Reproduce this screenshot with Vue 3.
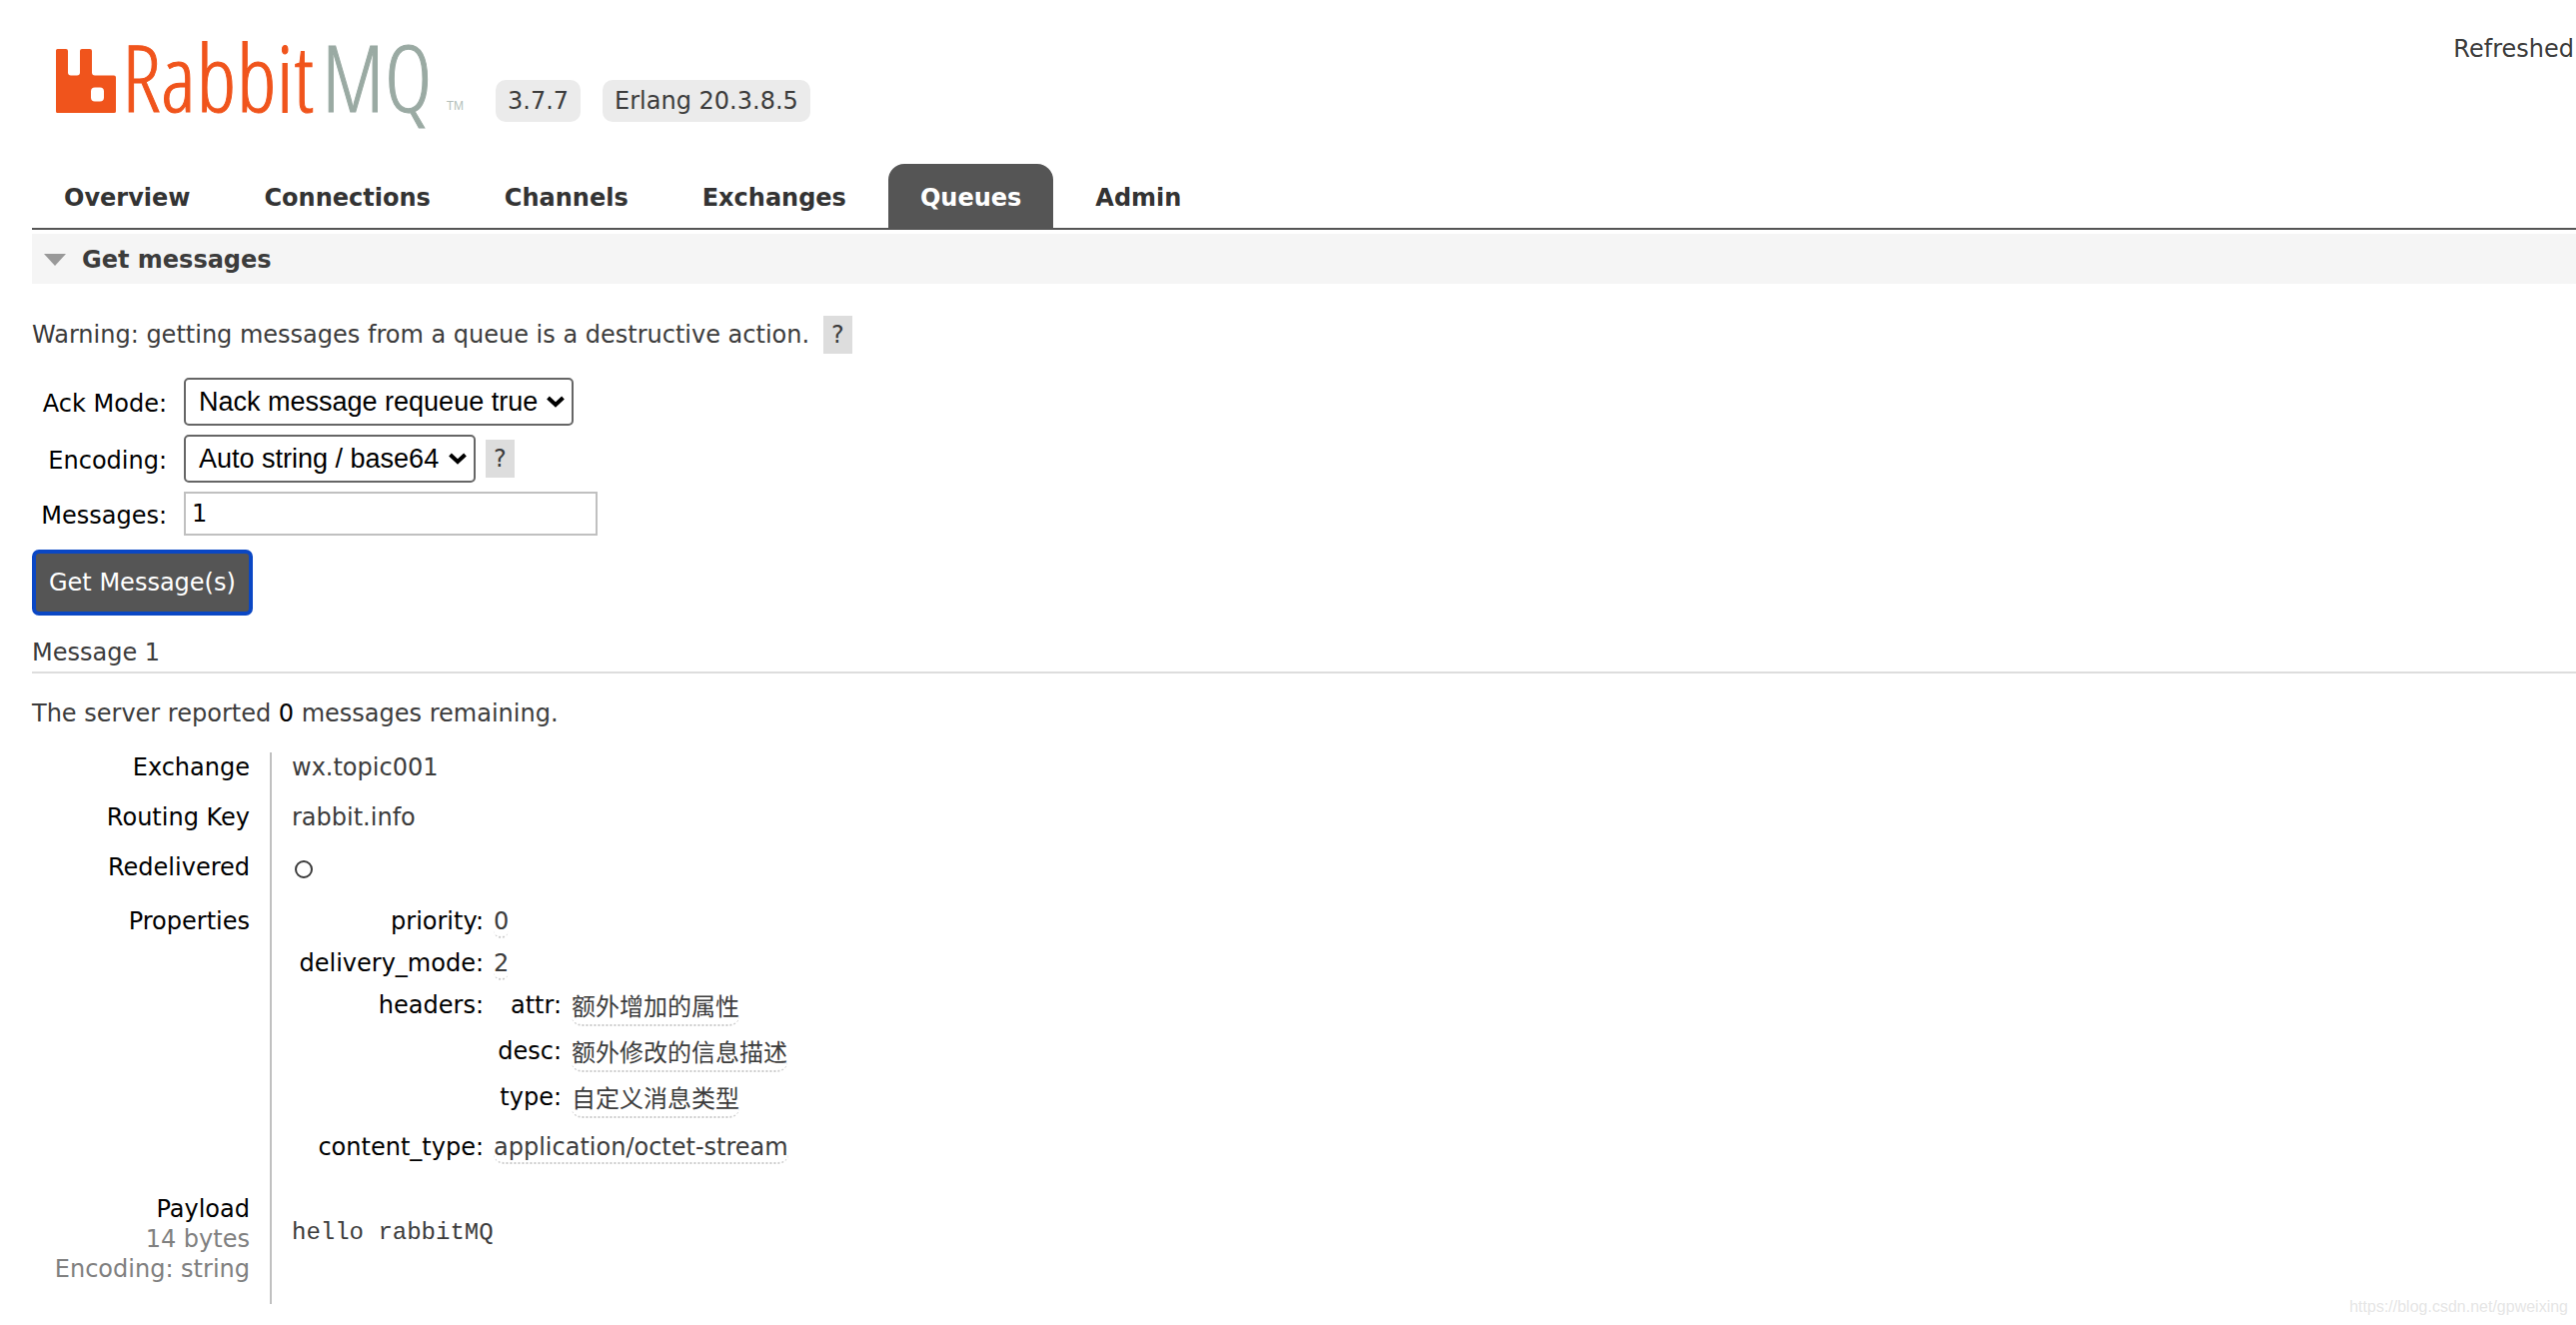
<script setup>
import { ref } from 'vue'

const tabs = ['Overview', 'Connections', 'Channels', 'Exchanges', 'Queues', 'Admin']
const activeTab = ref('Queues')
const ackMode = ref('Nack message requeue true')
const encoding = ref('Auto string / base64')
const count = ref('1')

const headers = [
  { key: 'attr', value: '额外增加的属性' },
  { key: 'desc', value: '额外修改的信息描述' },
  { key: 'type', value: '自定义消息类型' },
]
</script>

<template>
  <div class="page">
    <header class="top">
      <a class="logo" href="#" aria-label="RabbitMQ">
        <svg class="mark" viewBox="0 0 60 64" aria-hidden="true">
          <path
            fill="#f0541c"
            fill-rule="evenodd"
            d="M0 1.500Q0 0 1.500 0H10Q12 0 12 2V23.500Q12 26.500 15 26.500H21Q24 26.500 24 23.500V2Q24 0 26 0H34Q36 0 36 2V23.500Q36 26.500 39 26.500H58Q60 26.500 60 28.500V62.500Q60 64 58 64H1.500Q0 64 0 62.500ZM39 38.500Q35 38.500 35 42.500V48.500Q35 52.500 39 52.500H44Q48 52.500 48 48.500V42.500Q48 38.500 44 38.500Z"
          />
        </svg>
        <span class="word"><span>Rabbit</span><span class="mq">MQ</span></span>
        <span class="tm">TM</span>
      </a>
      <span class="badge">3.7.7</span>
      <span class="badge">Erlang 20.3.8.5</span>
      <span class="refreshed">Refreshed</span>
    </header>

    <nav class="tabs">
      <a
        v-for="tab in tabs"
        :key="tab"
        href="#"
        :class="['tab', { active: tab === activeTab }]"
        @click.prevent="activeTab = tab"
        >{{ tab }}</a
      >
    </nav>

    <main>
      <h2 class="section">
        <svg class="tri" viewBox="0 0 22 12" aria-hidden="true"><path fill="#999" d="M0 0H22L11 12Z" /></svg>
        Get messages
      </h2>

      <p class="warning">
        Warning: getting messages from a queue is a destructive action.
        <button type="button" class="help">?</button>
      </p>

      <form @submit.prevent>
        <div class="fields">
          <label for="ack">Ack Mode:</label>
          <div class="control">
            <span class="drop ack">
              <select id="ack" v-model="ackMode">
                <option>Nack message requeue true</option>
              </select>
              <svg viewBox="0 0 20 14" aria-hidden="true"><path d="M2.500 3L10 10L17.500 3" /></svg>
            </span>
          </div>

          <label for="enc">Encoding:</label>
          <div class="control">
            <span class="drop enc">
              <select id="enc" v-model="encoding">
                <option>Auto string / base64</option>
              </select>
              <svg viewBox="0 0 20 14" aria-hidden="true"><path d="M2.500 3L10 10L17.500 3" /></svg>
            </span>
            <button type="button" class="help">?</button>
          </div>

          <label for="count">Messages:</label>
          <div class="control">
            <input id="count" v-model="count" type="text" />
          </div>
        </div>
        <button type="submit" class="get">Get Message(s)</button>
      </form>

      <h3 class="message">Message 1</h3>
      <p class="remaining">The server reported <b>0</b> messages remaining.</p>

      <table class="facts">
        <tbody>
          <tr>
            <th>Exchange</th>
            <td>wx.topic001</td>
          </tr>
          <tr>
            <th>Routing Key</th>
            <td>rabbit.info</td>
          </tr>
          <tr class="redelivered">
            <th>Redelivered</th>
            <td>
              <svg class="ring" viewBox="0 0 20 20" role="img" aria-label="No">
                <circle cx="10" cy="10" r="8" />
              </svg>
            </td>
          </tr>
          <tr>
            <th>Properties</th>
            <td>
              <table class="props">
                <tbody>
                  <tr>
                    <th>priority:</th>
                    <td><abbr>0</abbr></td>
                  </tr>
                  <tr>
                    <th>delivery_mode:</th>
                    <td><abbr>2</abbr></td>
                  </tr>
                  <tr class="nest">
                    <th>headers:</th>
                    <td>
                      <table class="headers">
                        <tbody>
                          <tr v-for="h in headers" :key="h.key">
                            <th>{{ h.key }}:</th>
                            <td><abbr>{{ h.value }}</abbr></td>
                          </tr>
                        </tbody>
                      </table>
                    </td>
                  </tr>
                  <tr>
                    <th>content_type:</th>
                    <td><abbr>application/octet-stream</abbr></td>
                  </tr>
                </tbody>
              </table>
            </td>
          </tr>
          <tr class="payload">
            <th>
              Payload
              <small>14 bytes</small>
              <small>Encoding: string</small>
            </th>
            <td><pre>hello rabbitMQ</pre></td>
          </tr>
        </tbody>
      </table>
    </main>

    <span class="watermark">https://blog.csdn.net/gpweixing</span>
  </div>
</template>

<style>
body {
  background: #fff;
}
</style>

<style scoped>
.page {
  position: relative;
  box-sizing: border-box;
  min-height: 100vh;
  padding: 34px 0 20px 32px;
  overflow: hidden;
  color: #3c3c3c;
  font: 24px/30px Verdana, 'DejaVu Sans', 'Noto Sans CJK SC', sans-serif;
}
.top {
  display: flex;
  align-items: flex-end;
  height: 88px;
  padding: 0 2px 42px 24px;
}
.logo {
  display: flex;
  flex-shrink: 0;
  align-items: flex-end;
  width: 408px;
  height: 64px;
  margin: 0 32px 9px 0;
  text-decoration: none;
  color: #f0541c;
}
.mark {
  flex-shrink: 0;
  width: 60px;
  height: 64px;
  margin-right: 6px;
}
.word {
  display: flex;
  gap: 8px;
  margin-bottom: 4px;
  font: 300 92px/64px 'Open Sans Condensed Light', 'Liberation Sans Narrow', 'Open Sans Condensed', sans-serif;
  -webkit-text-stroke: 1px currentColor;
}
.mq {
  color: #9aaaa3;
}
.tm {
  margin-left: auto;
  font: 12px/14px 'Liberation Sans', sans-serif;
  color: #b4bfba;
}
.badge {
  margin-right: 22px;
  padding: 6px 12px;
  border-radius: 10px;
  background: #ebebeb;
}
.refreshed {
  align-self: flex-start;
  margin-left: auto;
}
.tabs {
  display: flex;
  gap: 10px;
  border-bottom: 2px solid #555;
}
.tab {
  padding: 19px 32px 15px;
  border-radius: 16px 16px 0 0;
  color: #333;
  font-weight: bold;
  text-decoration: none;
}
.tab.active {
  background: #555;
  color: #fff;
}
.section {
  display: flex;
  align-items: center;
  gap: 16px;
  margin: 4px 0 32px;
  padding: 11px 12px 9px;
  background: #f5f5f5;
  font-size: 24px;
}
.tri {
  width: 22px;
  height: 12px;
}
.warning {
  display: flex;
  align-items: center;
  gap: 14px;
  margin: 0 0 24px;
}
.help {
  padding: 4px 8px;
  border: 0;
  background: #ddd;
  color: #3c3c3c;
  font: inherit;
}
.fields {
  display: grid;
  grid-template-columns: 135px 1fr;
  align-items: center;
  gap: 9px 17px;
  margin-bottom: 14px;
  color: #000;
}
.fields label {
  padding-top: 3px;
  text-align: right;
}
.control {
  display: flex;
  align-items: center;
  gap: 10px;
}
.drop {
  position: relative;
}
.ack {
  width: 390px;
}
.enc {
  width: 292px;
}
.drop select {
  display: block;
  width: 100%;
  height: 48px;
  padding: 0 13px;
  border: 2px solid #666;
  border-radius: 5px;
  background: #fff;
  appearance: none;
  color: #000;
  font: 27px/32px 'Liberation Sans', Arial, sans-serif;
}
.drop svg {
  position: absolute;
  top: 17px;
  right: 8px;
  width: 20px;
  height: 14px;
  fill: none;
  stroke: #000;
  stroke-width: 4;
  pointer-events: none;
}
input {
  box-sizing: border-box;
  width: 414px;
  height: 44px;
  padding: 0 6px;
  border: 2px solid #c0c0c0;
  color: #000;
  font: inherit;
}
.get {
  display: block;
  padding: 14px 13px;
  border: 4px solid #0a47c4;
  border-radius: 7px;
  background: #555;
  color: #fff;
  font: inherit;
}
.message {
  margin: 22px 0 25px;
  padding-bottom: 4px;
  border-bottom: 2px solid #ddd;
  font-size: 24px;
  font-weight: normal;
}
.remaining {
  margin: 0 0 24px;
}
.remaining b {
  color: #000;
  font-weight: normal;
}
table {
  border-spacing: 0;
}
th {
  padding: 0;
  color: #000;
  font-weight: normal;
  text-align: right;
  vertical-align: top;
}
td {
  padding: 0;
  vertical-align: top;
}
.facts > tbody > tr > th {
  width: 218px;
  padding: 0 20px 20px 0;
  border-right: 2px solid #c0c0c0;
}
.facts > tbody > tr > td {
  padding: 0 0 20px 20px;
}
.redelivered {
  height: 54px;
}
.ring {
  display: block;
  width: 20px;
  height: 20px;
  margin: 7px 2px;
  fill: none;
  stroke: #3c3c3c;
  stroke-width: 2;
}
.props > tbody > tr > th {
  width: 192px;
  padding: 0 10px 12px 0;
}
.props > tbody > tr.nest > td {
  padding-bottom: 4px;
}
.headers th {
  width: 68px;
  padding: 0 10px 16px 0;
}
abbr {
  display: block;
  width: max-content;
  border-bottom: 2px dotted #ccc;
  border-radius: 10px;
}
.headers abbr {
  padding: 2px 0;
}
.payload {
  height: 110px;
}
small {
  display: block;
  color: #808080;
  font-size: 24px;
}
pre {
  margin: 24px 0 0;
  font: 24px/30px 'Liberation Mono', monospace;
}
.watermark {
  position: absolute;
  right: 8px;
  bottom: 8px;
  color: #e6e6e6;
  font: 16px/20px 'Liberation Sans', Arial, sans-serif;
}
</style>
